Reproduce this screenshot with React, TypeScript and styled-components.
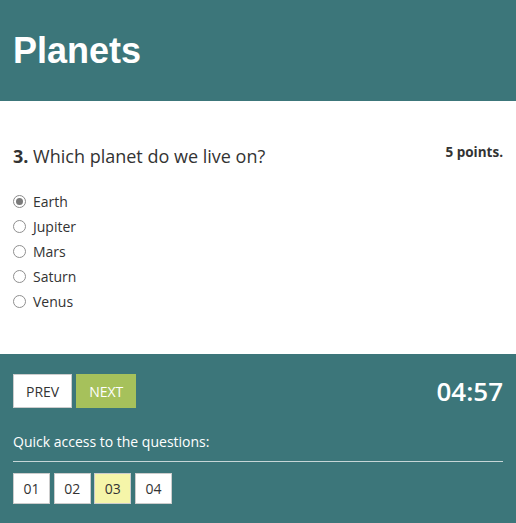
import React, { useState } from "react";
import styled, { createGlobalStyle } from "styled-components";

const GlobalStyle = createGlobalStyle`
  html, body {
    margin: 0;
    padding: 0;
    background: #ffffff;
  }
  body {
    font-family: "Open Sans", "Liberation Sans", Arial, sans-serif;
    color: #333333;
  }
`;

const TEAL = "#3c767a";

const Page = styled.div`
  width: 100%;
  display: flex;
  flex-direction: column;
`;

const Header = styled.header`
  height: 101px;
  background: ${TEAL};
  display: flex;
  align-items: center;
  padding: 0 13px;
  box-sizing: border-box;
`;

const Title = styled.h1`
  margin: 0;
  font-family: "Liberation Sans", Arial, sans-serif;
  font-weight: bold;
  font-size: 36px;
  line-height: 40px;
  color: #ffffff;
`;

const QuestionSection = styled.section`
  padding: 42px 13px 40px;
`;

const QuestionRow = styled.div`
  display: flex;
  justify-content: space-between;
  align-items: flex-start;
  height: 26px;
`;

const QuestionText = styled.h2`
  margin: 0;
  font-size: 18px;
  font-weight: normal;
  line-height: 26px;
  color: #333333;
`;

const Number = styled.strong`
  font-weight: bold;
`;

const Points = styled.span`
  font-size: 13.5px;
  font-weight: bold;
  line-height: 18px;
  color: #333333;
`;

const Options = styled.div`
  margin-top: 20px;
  display: flex;
  flex-direction: column;
`;

const OptionLabel = styled.label`
  display: flex;
  align-items: center;
  height: 25px;
  font-size: 14px;
  color: #333333;
  cursor: pointer;
`;

const Radio = styled.input`
  appearance: none;
  margin: 0 7px 0 0;
  width: 13px;
  height: 13px;
  border-radius: 50%;
  border: 1px solid #8f8f8f;
  box-sizing: border-box;
  background: #ffffff;
  position: relative;
  &:checked {
    border-color: #8a8a8a;
  }
  &:checked::after {
    content: "";
    position: absolute;
    left: 2px;
    top: 2px;
    width: 7px;
    height: 7px;
    border-radius: 50%;
    background: #7a7a7a;
  }
`;

const Footer = styled.footer`
  background: ${TEAL};
  padding: 20px 13px 19px;
  color: #ffffff;
`;

const Controls = styled.div`
  display: flex;
  justify-content: space-between;
  align-items: center;
`;

const NavGroup = styled.div`
  display: flex;
  gap: 4px;
`;

const NavButton = styled.button<{ $primary?: boolean }>`
  height: 34px;
  padding: 0 12px;
  font-family: "Open Sans", sans-serif;
  font-size: 14px;
  text-transform: uppercase;
  border: 1px solid ${(p) => (p.$primary ? "#a6c15b" : "#cccccc")};
  background: ${(p) => (p.$primary ? "#a6c15b" : "#ffffff")};
  color: ${(p) => (p.$primary ? "#ffffff" : "#333333")};
  cursor: pointer;
`;

const Timer = styled.div`
  font-size: 26px;
  font-weight: 600;
  color: #ffffff;
  line-height: 34px;
`;

const QuickLabel = styled.div`
  margin-top: 24px;
  font-size: 14px;
  line-height: 20px;
  padding-bottom: 9px;
  border-bottom: 1px solid #c6d6d7;
`;

const QuickList = styled.div`
  margin-top: 11px;
  display: flex;
  gap: 3.7px;
`;

const QuickButton = styled.button<{ $active?: boolean }>`
  width: 37px;
  height: 31px;
  padding: 0;
  font-family: "Open Sans", sans-serif;
  font-size: 14px;
  color: #333333;
  border: 1px solid #cccccc;
  background: ${(p) => (p.$active ? "#f5f5a9" : "#ffffff")};
  cursor: pointer;
`;

const answers = ["Earth", "Jupiter", "Mars", "Saturn", "Venus"];
const questions = ["01", "02", "03", "04"];

const App = () => {
  const [answer, setAnswer] = useState("Earth");

  return (
    <Page>
      <GlobalStyle />
      <Header>
        <Title>Planets</Title>
      </Header>
      <QuestionSection>
        <QuestionRow>
          <QuestionText>
            <Number>3.</Number> Which planet do we live on?
          </QuestionText>
          <Points>5 points.</Points>
        </QuestionRow>
        <Options>
          {answers.map((a) => (
            <OptionLabel key={a}>
              <Radio
                type="radio"
                name="answer"
                checked={answer === a}
                onChange={() => setAnswer(a)}
              />
              {a}
            </OptionLabel>
          ))}
        </Options>
      </QuestionSection>
      <Footer>
        <Controls>
          <NavGroup>
            <NavButton>Prev</NavButton>
            <NavButton $primary>Next</NavButton>
          </NavGroup>
          <Timer>04:57</Timer>
        </Controls>
        <QuickLabel>Quick access to the questions:</QuickLabel>
        <QuickList>
          {questions.map((q) => (
            <QuickButton key={q} $active={q === "03"}>
              {q}
            </QuickButton>
          ))}
        </QuickList>
      </Footer>
    </Page>
  );
};

export default App;
